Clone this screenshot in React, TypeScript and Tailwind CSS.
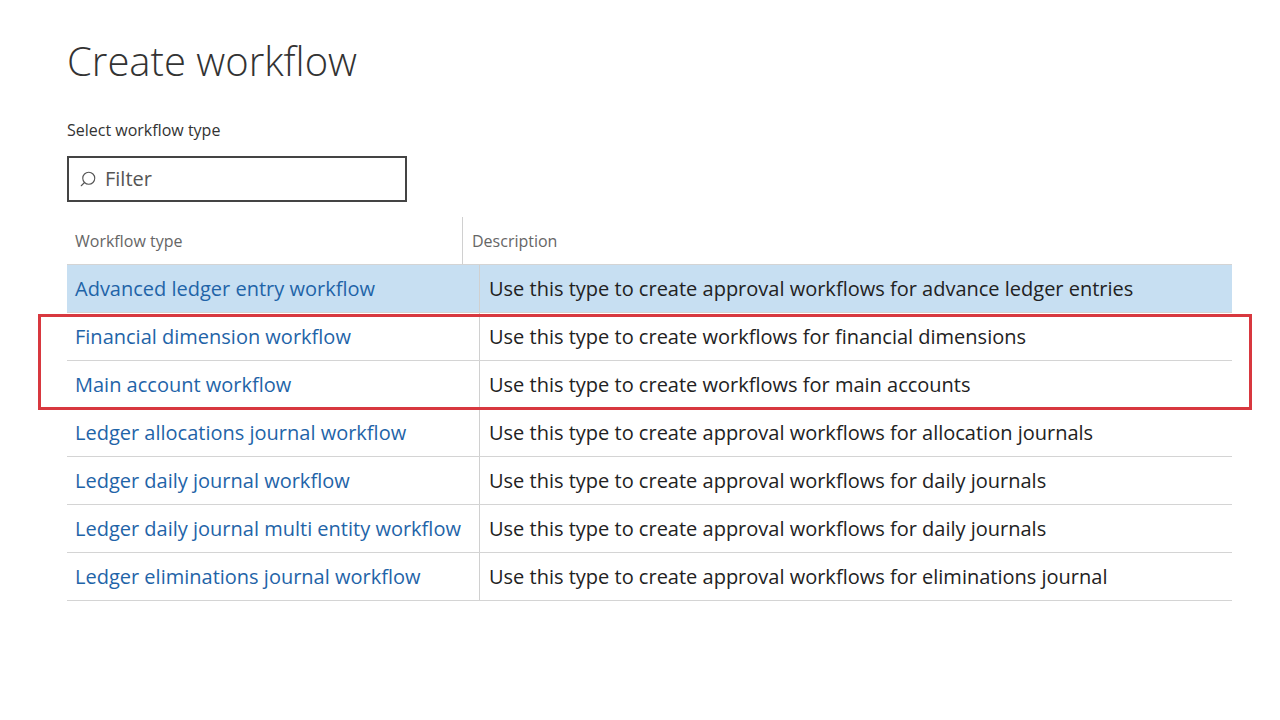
import { Search } from 'lucide-react';

const rows = [
  ['Advanced ledger entry workflow', 'Use this type to create approval workflows for advance ledger entries'],
  ['Financial dimension workflow', 'Use this type to create workflows for financial dimensions'],
  ['Main account workflow', 'Use this type to create workflows for main accounts'],
  ['Ledger allocations journal workflow', 'Use this type to create approval workflows for allocation journals'],
  ['Ledger daily journal workflow', 'Use this type to create approval workflows for daily journals'],
  ['Ledger daily journal multi entity workflow', 'Use this type to create approval workflows for daily journals'],
  ['Ledger eliminations journal workflow', 'Use this type to create approval workflows for eliminations journal'],
];

function Row({ name, desc, selected }: { name: string; desc: string; selected?: boolean }) {
  return (
    <div className={`flex h-[48px] border-b border-[#d4d4d4] ${selected ? 'bg-[#c7dff2]' : 'bg-white'}`}>
      <div className="w-[412px] pl-[8px] flex items-center text-[20px] text-[#1f64a8] whitespace-nowrap">{name}</div>
      <div className="flex-1 border-l border-[#d0d0d0] pl-[9px] flex items-center text-[20px] text-[#222] whitespace-nowrap">{desc}</div>
    </div>
  );
}

export default function App() {
  return (
    <div className="w-[1280px] h-[720px] bg-white overflow-hidden pl-[67px] pt-[33px]" style={{ fontFamily: '"Open Sans", "Noto Sans", sans-serif' }}>
      <h1 className="text-[40px] font-light text-[#333] leading-[56px]">Create workflow</h1>
      <div className="mt-[29px] text-[16px] text-[#333]">Select workflow type</div>
      <div className="mt-[14px] w-[340px] h-[46px] border-2 border-[#444] flex items-center pl-[10px] gap-[8px] text-[20px] text-[#555]">
        <Search className="w-[18px] h-[18px] -scale-x-100 text-[#555]" strokeWidth={1.5} />
        Filter
      </div>
      <div className="w-[1165px] mt-[15px]">
        <div className="flex h-[48px] border-b border-[#d4d4d4]">
          <div className="w-[396px] pl-[8px] flex items-center text-[16px] text-[#666] border-r border-[#d0d0d0]">Workflow type</div>
          <div className="pl-[9px] flex items-center text-[16px] text-[#666]">Description</div>
        </div>
        <Row name={rows[0][0]} desc={rows[0][1]} selected />
        <div className="relative">
          <Row name={rows[1][0]} desc={rows[1][1]} />
          <Row name={rows[2][0]} desc={rows[2][1]} />
          <div className="absolute left-[-29px] right-[-20px] top-[1px] bottom-[-1px] border-[3px] border-[#d8383f] pointer-events-none" />
        </div>
        {rows.slice(3).map(([n, d]) => (
          <Row key={n} name={n} desc={d} />
        ))}
      </div>
    </div>
  );
}
